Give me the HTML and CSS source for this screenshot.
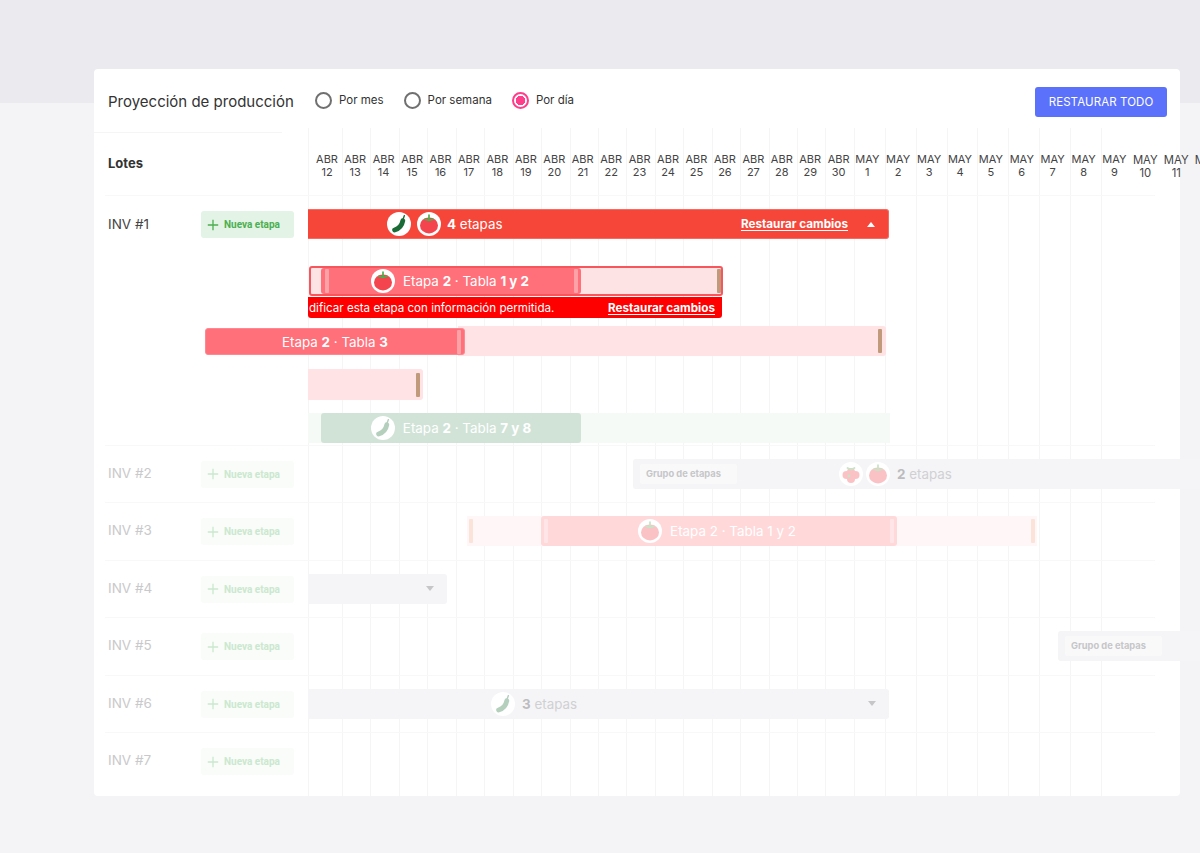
FILE: index.html
```html
<!DOCTYPE html>
<html lang="es">
<head>
    <meta charset="UTF-8">
    <meta name="viewport" content="width=device-width, initial-scale=1.0">
    <title>Proyección de producción</title>
    <link rel="stylesheet" href="styles.css">
</head>
<body>
    <svg class="defs" width="0" height="0" aria-hidden="true">
        <symbol id="tomate" viewBox="0 0 24 24">
            <ellipse cx="12" cy="13.4" rx="9" ry="8" fill="#f4454e"/>
            <path d="M12 3.2V8M8 7.2L12 8.4L16 7.2" fill="none" stroke="#4caf50" stroke-width="1.7" stroke-linecap="round"/>
        </symbol>
        <symbol id="pepino" viewBox="0 0 24 24">
            <path d="M7.6 18C11.6 16.8 15 13.2 15.8 8.8" fill="none" stroke="#1b6b36" stroke-width="4.8" stroke-linecap="round"/>
            <path d="M15.8 8L17.4 3.6" fill="none" stroke="#1b6b36" stroke-width="1.4" stroke-linecap="round"/>
        </symbol>
        <symbol id="frambuesa" viewBox="0 0 24 24">
            <circle cx="7.5" cy="13" r="4" fill="#f4454e"/>
            <circle cx="16.5" cy="13" r="4" fill="#f4454e"/>
            <circle cx="12" cy="17" r="4" fill="#f4454e"/>
            <circle cx="12" cy="10" r="4" fill="#f4454e"/>
            <circle cx="10" cy="14" r="1.4" fill="#4caf50"/>
            <path d="M8.5 6L12 7.6L15.5 6" fill="none" stroke="#4caf50" stroke-width="1.8" stroke-linecap="round"/>
        </symbol>
        <symbol id="mas" viewBox="0 0 12 12">
            <path d="M6 .8V11.2M.8 6H11.2" fill="none" stroke="currentColor" stroke-width="1.3"/>
        </symbol>
    </svg>

    <main class="tarjeta">
        <header class="barra">
            <h1 class="titulo">Proyección de producción</h1>
            <div class="vistas">
                <label class="vista"><input type="radio" name="vista">Por mes</label>
                <label class="vista"><input type="radio" name="vista">Por semana</label>
                <label class="vista"><input type="radio" name="vista" checked>Por día</label>
            </div>
            <button class="restaurar-todo">RESTAURAR TODO</button>
        </header>

        <section class="grafico">
            <div class="dias">
                <div class="dia primero">ABR<br>12</div>
                <div class="dia">ABR<br>13</div>
                <div class="dia">ABR<br>14</div>
                <div class="dia">ABR<br>15</div>
                <div class="dia">ABR<br>16</div>
                <div class="dia">ABR<br>17</div>
                <div class="dia">ABR<br>18</div>
                <div class="dia">ABR<br>19</div>
                <div class="dia">ABR<br>20</div>
                <div class="dia">ABR<br>21</div>
                <div class="dia">ABR<br>22</div>
                <div class="dia">ABR<br>23</div>
                <div class="dia">ABR<br>24</div>
                <div class="dia">ABR<br>25</div>
                <div class="dia">ABR<br>26</div>
                <div class="dia">ABR<br>27</div>
                <div class="dia">ABR<br>28</div>
                <div class="dia">ABR<br>29</div>
                <div class="dia">ABR<br>30</div>
                <div class="dia mayo">MAY<br>1</div>
                <div class="dia mayo">MAY<br>2</div>
                <div class="dia mayo">MAY<br>3</div>
                <div class="dia mayo">MAY<br>4</div>
                <div class="dia mayo">MAY<br>5</div>
                <div class="dia mayo">MAY<br>6</div>
                <div class="dia mayo">MAY<br>7</div>
                <div class="dia mayo">MAY<br>8</div>
                <div class="dia mayo">MAY<br>9</div>
                <div class="dia mayo fin">MAY<br>10</div>
                <div class="dia mayo fin">MAY<br>11</div>
                <div class="dia mayo fin">MAY<br>12</div>
            </div>

            <div class="fila cabecera"><span class="lotes">Lotes</span></div>

            <!-- INV 1 abierto, con sus etapas -->
            <div class="fila abierta">
                <span class="lote">INV #1</span>
                <button class="nueva"><svg class="mas"><use href="#mas"/></svg>Nueva etapa</button>
                <div class="pista">
                    <div class="carril">
                        <div class="grupo rojo" style="left:0;width:581px">
                            <span class="icono"><svg><use href="#pepino"/></svg></span>
                            <span class="icono"><svg><use href="#tomate"/></svg></span>
                            <span class="texto"><b>4</b> etapas</span>
                            <a class="enlace">Restaurar cambios</a>
                            <i class="tri arriba"></i>
                        </div>
                    </div>
                    <div class="carril error">
                        <div class="rango borde" style="left:1px;width:414px">
                            <div class="etapa rosa" style="left:10px;width:260px">
                                <span class="icono"><svg><use href="#tomate"/></svg></span>
                                <span class="texto">Etapa <b>2</b> · Tabla <b>1 y 2</b></span>
                                <i class="asa clara" style="left:4px"></i>
                                <i class="asa clara" style="right:3px"></i>
                            </div>
                            <i class="asa tostada" style="right:0"></i>
                        </div>
                        <div class="aviso">
                            <span>dificar esta etapa con información permitida.</span>
                            <a class="enlace">Restaurar cambios</a>
                        </div>
                    </div>
                    <div class="carril tabla-3">
                        <div class="rango" style="left:150px;width:428px">
                            <i class="asa tostada" style="right:4px"></i>
                        </div>
                        <div class="etapa rosa" style="left:-103px;width:260px">
                            <span class="texto">Etapa <b>2</b> · Tabla <b>3</b></span>
                            <i class="asa clara" style="right:3px"></i>
                        </div>
                    </div>
                    <div class="carril suelto alto">
                        <div class="rango redondo" style="left:0;width:115px">
                            <i class="asa tostada" style="right:3px"></i>
                        </div>
                    </div>
                    <div class="carril suelto">
                        <div class="rango verde" style="left:0;width:582px"></div>
                        <div class="etapa verde-fuerte" style="left:13px;width:260px">
                            <span class="icono palido"><svg><use href="#pepino"/></svg></span>
                            <span class="texto">Etapa <b>2</b> · Tabla <b>7 y 8</b></span>
                        </div>
                    </div>
                </div>
            </div>

            <div class="fila tenue">
                <span class="lote">INV #2</span>
                <button class="nueva"><svg class="mas"><use href="#mas"/></svg>Nueva etapa</button>
                <div class="pista">
                    <div class="carril">
                        <div class="grupo gris" style="left:325px;width:580px">
                            <span class="ficha">Grupo de etapas</span>
                            <span class="icono palido"><svg><use href="#frambuesa"/></svg></span>
                            <span class="icono palido"><svg><use href="#tomate"/></svg></span>
                            <span class="texto"><b>2</b> etapas</span>
                        </div>
                    </div>
                </div>
            </div>

            <div class="fila tenue">
                <span class="lote">INV #3</span>
                <button class="nueva"><svg class="mas"><use href="#mas"/></svg>Nueva etapa</button>
                <div class="pista">
                    <div class="carril">
                        <div class="rango lavado" style="left:159px;width:570px">
                            <i class="asa durazno" style="left:2px"></i>
                            <i class="asa durazno" style="right:2px"></i>
                        </div>
                        <div class="etapa rosa-palido" style="left:233px;width:356px">
                            <span class="icono palido"><svg><use href="#tomate"/></svg></span>
                            <span class="texto">Etapa 2 · Tabla 1 y 2</span>
                            <i class="asa clara" style="left:3px"></i>
                            <i class="asa clara" style="right:3px"></i>
                        </div>
                    </div>
                </div>
            </div>

            <div class="fila tenue">
                <span class="lote">INV #4</span>
                <button class="nueva"><svg class="mas"><use href="#mas"/></svg>Nueva etapa</button>
                <div class="pista">
                    <div class="carril">
                        <div class="grupo gris al-final" style="left:0;width:139px"><i class="tri abajo"></i></div>
                    </div>
                </div>
            </div>

            <div class="fila tenue">
                <span class="lote">INV #5</span>
                <button class="nueva"><svg class="mas"><use href="#mas"/></svg>Nueva etapa</button>
                <div class="pista">
                    <div class="carril">
                        <div class="grupo gris" style="left:750px;width:160px">
                            <span class="ficha">Grupo de etapas</span>
                        </div>
                    </div>
                </div>
            </div>

            <div class="fila tenue">
                <span class="lote">INV #6</span>
                <button class="nueva"><svg class="mas"><use href="#mas"/></svg>Nueva etapa</button>
                <div class="pista">
                    <div class="carril">
                        <div class="grupo gris tres" style="left:0;width:581px">
                            <span class="icono palido"><svg><use href="#pepino"/></svg></span>
                            <span class="texto"><b>3</b> etapas</span>
                            <i class="tri abajo"></i>
                        </div>
                    </div>
                </div>
            </div>

            <div class="fila tenue ultima">
                <span class="lote">INV #7</span>
                <button class="nueva"><svg class="mas"><use href="#mas"/></svg>Nueva etapa</button>
                <div class="pista"></div>
            </div>
        </section>
    </main>
</body>
</html>
```

FILE: styles.css
```css
html, body {
    overflow: hidden;
}

body {
    margin: 0;
    height: 853px;
    font-family: "Inter", "Liberation Sans", sans-serif;
    color: #333;
    background: linear-gradient(#eaeaef 103px, #f4f4f6 103px);
}

.defs {
    position: absolute;
}

.tarjeta {
    width: 1086px;
    height: 727px;
    margin: 69px 0 0 94px;
    background: #fff;
    border-radius: 4px;
}

/* barra superior */
.barra {
    display: flex;
    align-items: center;
    height: 64px;
    padding: 0 13px 0 14px;
    background: linear-gradient(#f5f5f6, #f5f5f6) no-repeat left bottom / 188px 1px;
}

.titulo {
    width: 207px;
    margin: 0;
    font-size: 15px;
    font-weight: 400;
    white-space: nowrap;
}

.vistas {
    display: flex;
    gap: 20px;
    margin-bottom: 2px;
}

.vista {
    display: flex;
    align-items: center;
    gap: 7px;
    font-size: 11.5px;
    font-weight: 400;
}

.vista input {
    appearance: none;
    width: 17px;
    height: 17px;
    margin: 0;
    border: 2px solid #707070;
    border-radius: 50%;
}

.vista input:checked {
    border-color: #ff3d8b;
    background: radial-gradient(circle, #ff3d8b 0 4.5px, #fff 5px);
}

.restaurar-todo {
    width: 132px;
    height: 30px;
    margin-left: auto;
    margin-top: 2px;
    padding: 0;
    border: none;
    border-radius: 3px;
    background: #5b71fb;
    color: #fff;
    font-family: inherit;
    font-size: 11.5px;
    letter-spacing: .1px;
}

/* grafico */
.grafico {
    position: relative;
    height: 663px;
}

.dias {
    position: absolute;
    top: -5px;
    bottom: 0;
    left: 214px;
    display: flex;
    width: 920px;
}

.dia {
    flex: none;
    box-sizing: border-box;
    width: 28.44px;
    padding: 25px 3px 0 0;
    border-left: 1px solid #f5f5f6;
    font-size: 11px;
    line-height: 13px;
    text-align: center;
    color: #444;
}

.primero {
    width: 34px;
    padding-left: 3px;
    padding-right: 0;
}

.mayo {
    width: 30.9px;
    padding-right: 5px;
}

.fin {
    padding-top: 26px;
    font-size: 11.3px;
    border-left-color: transparent;
}

.fila {
    position: relative;
    display: flex;
    box-sizing: border-box;
    width: 1050px;
    height: 57.5px;
    margin-left: 11px;
    padding-left: 3px;
    border-bottom: 1px solid #f8f8f9;
}

.cabecera {
    align-items: center;
    height: 63px;
}

.lotes {
    font-size: 13px;
    font-weight: 700;
    margin-top: -3px;
}

.abierta {
    height: 249.6px;
}

.ultima {
    border-bottom: none;
}

.lote {
    flex: none;
    width: 93px;
    padding-top: 19px;
    font-size: 13.5px;
    line-height: 17px;
    color: #444;
}

.abierta .lote {
    padding-top: 20px;
}

.nueva {
    flex: none;
    display: flex;
    align-items: center;
    gap: 5px;
    width: 93px;
    height: 27px;
    margin: 15px 14px 0 0;
    padding: 0 0 0 6px;
    border: none;
    border-radius: 3px;
    background: #e3f3e6;
    color: #4caf50;
    font-family: "Roboto", sans-serif;
    font-size: 10px;
    font-weight: 700;
    white-space: nowrap;
}

.mas {
    width: 12px;
    height: 12px;
}

.pista {
    flex: 1;
    padding-top: 13px;
}

.carril {
    position: relative;
    height: 30px;
}

.error {
    height: 52px;
    margin-top: 27px;
}

.tabla-3 {
    margin-top: 8px;
}

.suelto {
    margin-top: 13px;
}

.alto {
    height: 31px;
}

.grupo, .etapa, .rango {
    position: absolute;
    top: 0;
    display: flex;
    align-items: center;
    box-sizing: border-box;
    height: 30px;
}

.grupo {
    border-radius: 0 3px 3px 0;
}

.etapa {
    justify-content: center;
    gap: 8px;
    border-radius: 3px;
}

.texto {
    font-size: 13.4px;
    white-space: nowrap;
    color: #fff;
}

.texto b {
    font-weight: 700;
}

.icono {
    flex: none;
    display: block;
    width: 24px;
    height: 24px;
    border-radius: 50%;
    background: #fff;
}

.icono svg {
    display: block;
    width: 24px;
    height: 24px;
}

.palido svg {
    opacity: .32;
}

.rojo {
    gap: 6px;
    padding: 0 13px 0 79px;
    background: #f64539;
    border: 1px solid #f9695f;
    border-left: none;
}

.enlace {
    font-size: 11.7px;
    font-weight: 700;
    color: #fff;
    text-decoration: underline;
    text-underline-offset: 2px;
    white-space: nowrap;
}

.rojo .enlace {
    margin-left: auto;
    margin-right: 13px;
}

.tri {
    width: 0;
    height: 0;
    border-left: 4px solid transparent;
    border-right: 4px solid transparent;
}

.arriba {
    border-bottom: 5px solid #fff;
}

.abajo {
    border-top: 5px solid #c6c6c8;
}

.rango {
    background: #ffe3e5;
}

.borde {
    border: 2px solid #f7565d;
    border-radius: 3px;
    background: #fde3e4;
}

.redondo {
    height: 31px;
    border-radius: 0 3px 3px 0;
}

.tabla-3 .rango {
    border-radius: 0 3px 3px 0;
}

.tabla-3 .etapa {
    top: 2px;
    height: 27px;
    border: 1px solid #ff8790;
}

.rosa {
    background: #ff707a;
}

.borde .etapa {
    height: 26px;
    padding-right: 2px;
}

.verde {
    background: #f5faf6;
}

.verde-fuerte {
    background: #d1e3d7;
}

.lavado {
    background: #fff7f7;
}

.rosa-palido {
    padding-right: 4px;
    background: #ffd8da;
}

.asa {
    position: absolute;
    top: 50%;
    width: 4px;
    height: 24px;
    margin-top: -12px;
    border-radius: 1px;
}

.clara {
    background: rgba(255, 255, 255, .35);
}

.tostada {
    background: #c09a7a;
}

.durazno {
    background: #fbe3da;
}

.aviso {
    position: absolute;
    top: 31px;
    left: 0;
    display: flex;
    align-items: center;
    justify-content: space-between;
    box-sizing: border-box;
    width: 414px;
    height: 21px;
    padding: 0 7px 0 1px;
    border-radius: 0 0 3px 3px;
    background: #ff0000;
    color: #fff;
    font-size: 11.6px;
    white-space: nowrap;
}

/* filas apagadas */
.tenue .lote {
    color: #c9c9cb;
}

.tenue .nueva {
    background: #f9fcf9;
    color: #cbe8cf;
}

.gris {
    background: #f5f5f7;
    border-radius: 3px;
    padding-left: 7px;
    gap: 3px;
}

.gris .texto {
    margin-left: 4px;
    color: #d0d0d3;
}

.gris .texto b {
    color: #bcbcbf;
}

.ficha {
    flex: none;
    box-sizing: border-box;
    width: 97px;
    height: 20px;
    margin-right: 99px;
    padding-left: 6px;
    border-radius: 2px;
    background: #f9f9fa;
    color: #c6c6c9;
    font-size: 9.3px;
    font-weight: 700;
    line-height: 20px;
    white-space: nowrap;
}

.al-final {
    justify-content: flex-end;
    padding-right: 13px;
    border-radius: 0 3px 3px 0;
}

.tres {
    padding-left: 183px;
    padding-right: 13px;
    border-radius: 0 3px 3px 0;
}

.tres .tri {
    margin-left: auto;
}
```
